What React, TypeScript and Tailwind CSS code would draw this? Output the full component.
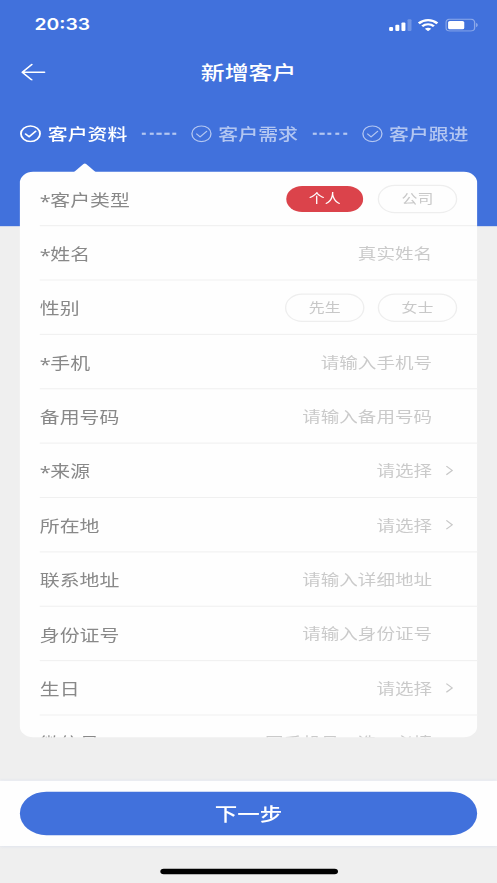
import { Fragment } from 'react';

type Field = {
  label: string;
  required?: boolean;
  placeholder?: string;
  select?: boolean;
  options?: string[];
  active?: string;
};

const steps = ['客户资料', '客户需求', '客户跟进'];

const fields: Field[] = [
  { label: '客户类型', required: true, options: ['个人', '公司'], active: '个人' },
  { label: '姓名', required: true, placeholder: '真实姓名' },
  { label: '性别', options: ['先生', '女士'] },
  { label: '手机', required: true, placeholder: '请输入手机号' },
  { label: '备用号码', placeholder: '请输入备用号码' },
  { label: '来源', required: true, placeholder: '请选择', select: true },
  { label: '所在地', placeholder: '请选择', select: true },
  { label: '联系地址', placeholder: '请输入详细地址' },
  { label: '身份证号', placeholder: '请输入身份证号' },
  { label: '生日', placeholder: '请选择', select: true },
  { label: '微信号', placeholder: '同手机号，选，必填' },
];

function StatusBar() {
  return (
    <div className="flex h-11 items-center justify-between pl-[26px] pr-[14.5px] pt-[2px]">
      <span className="pt-[0.5px] font-['Inter'] text-[14.6px] font-semibold leading-4">20:33</span>
      <div className="flex items-center">
        <svg className="h-3 w-[18px]" viewBox="0 0 18 12" fill="currentColor">
          <rect x="0.6" y="7.8" width="3" height="3.8" rx="0.9" />
          <rect x="5.3" y="5.8" width="3" height="5.8" rx="0.9" />
          <rect x="9.9" y="3.6" width="3" height="8" rx="0.9" />
          <rect x="14.5" y="0.8" width="3" height="10.8" rx="0.9" opacity="0.25" />
        </svg>
        <svg className="ml-[4.3px] h-3 w-[16px]" viewBox="0 0 16 12" fill="none" stroke="currentColor" strokeWidth="2">
          <path d="M1 4.5C5 0.5 11 0.5 15 4.5" />
          <path d="M3.6 7.2c2.5-2.5 6.3-2.5 8.8 0" />
          <path d="M5.6 9.4c1.4-1.3 3.4-1.3 4.8 0L8 11.8z" fill="currentColor" stroke="none" />
        </svg>
        <svg className="ml-[4.7px] h-3 w-[25px]" viewBox="0 0 25 12" fill="currentColor">
          <rect x="0.5" y="0.6" width="21.6" height="11" rx="2.8" fill="none" stroke="currentColor" opacity="0.4" />
          <rect x="2.1" y="2.2" width="12.2" height="7.8" rx="1.4" />
          <path d="M23.2 4.2c1.7.6 1.7 3.2 0 3.8z" opacity="0.4" />
        </svg>
      </div>
    </div>
  );
}

function Steps() {
  return (
    <div className="flex items-center justify-between pl-[15.4px] pr-[21.5px] pt-[25.3px]">
      {steps.map((step, i) => (
        <Fragment key={step}>
          {i > 0 && (
            <div className="flex gap-[2.4px] opacity-60">
              {[0, 1, 2, 3, 4].map(n => (
                <span key={n} className="h-[2px] w-[3.4px] bg-white" />
              ))}
            </div>
          )}
          <div className={i === 0 ? 'flex items-center gap-[4.7px]' : 'flex items-center gap-[4.7px] opacity-60'}>
            <svg
              className="h-4 w-4"
              viewBox="0 0 16 16"
              fill="none"
              stroke="currentColor"
              strokeWidth={i === 0 ? 1.4 : 1}
              strokeLinecap="round"
              strokeLinejoin="round"
            >
              <circle cx="8" cy="8" r="7.2" />
              <path d="M4.3 8.2l2.7 2.6 4.9-5.1" />
            </svg>
            <span className="text-[15px] font-medium leading-5">{step}</span>
          </div>
        </Fragment>
      ))}
    </div>
  );
}

function FieldRow({ field }: { field: Field }) {
  return (
    <div className="ml-[15px] flex h-[50px] shrink-0 items-center justify-between border-b border-[#f0f0f0]">
      <span className="flex h-5 text-[15px] leading-5 text-[#888888]">
        {field.required && <span className="w-[8px] font-['Noto_Sans'] leading-[22px]">*</span>}
        {field.label}
      </span>
      {field.options ? (
        <div className="flex gap-[10px] pr-[15px]">
          {field.options.map(option => (
            <button
              key={option}
              className={
                option === field.active
                  ? 'h-[26px] w-[60px] rounded-full border border-transparent bg-[#db434b] bg-clip-padding pb-[1px] text-[12px] leading-[22px] text-white'
                  : 'h-[26px] w-[60px] rounded-full border border-[#eeeeee] pb-[1px] text-[12px] leading-[22px] text-[#c8c8c8]'
              }
            >
              {option}
            </button>
          ))}
        </div>
      ) : (
        <div className="flex items-center text-[14px] text-[#cacaca]">
          <span>{field.placeholder}</span>
          <div className="flex w-[34px] pl-[9.5px]">
            {field.select && (
              <svg className="h-[10px] w-[7px]" viewBox="0 0 7 10" fill="none" stroke="#c8c8c8">
                <path d="M0.8 0.6L5.2 4.6L0.8 8.6" />
              </svg>
            )}
          </div>
        </div>
      )}
    </div>
  );
}

export default function App() {
  return (
    <div className="h-[883px] w-[497px] overflow-hidden bg-[#efefef]">
      {/* 375x812 layout stretched over the viewport */}
      <div className="flex h-[812px] w-[375px] origin-top-left scale-x-[1.32533] scale-y-[1.08744] flex-col font-['Noto_Sans_CJK_SC',sans-serif]">
        <header className="h-[208px] shrink-0 bg-[#4171dc] text-white">
          <StatusBar />
          <div className="grid h-11 grid-cols-[1fr_auto_1fr] items-center px-4">
            <svg className="h-[16px] w-[19px]" viewBox="0 0 19 16" fill="none" stroke="currentColor" strokeWidth="1.3" strokeLinecap="round">
              <path d="M17.6 8.4H1M8 1.2L0.8 8.4L8 15.6" />
            </svg>
            <h1 className="pb-[1px] text-[18px] font-medium leading-6">新增客户</h1>
          </div>
          <Steps />
        </header>

        <main className="relative mx-[15px] -mt-[50px] h-[520px] shrink-0">
          <svg className="absolute -top-[8px] left-[39.5px] h-[9px] w-[18px]" viewBox="0 0 18 9" fill="#fefefe">
            <path d="M0 9L8 0.8Q9 0 10 0.8L18 9z" />
          </svg>
          <div className="flex h-full flex-col overflow-hidden rounded-[10px] bg-[#fefefe]">
            {fields.map(field => (
              <FieldRow key={field.label} field={field} />
            ))}
          </div>
        </main>

        <footer className="mt-10 h-[60px] shrink-0 bg-[#fefefe] px-[15px] py-[10px] shadow-[0_0_3px_rgba(65,113,220,0.2)]">
          <button className="h-10 w-full rounded-full bg-[#4171dc] pb-[1px] text-[17px] font-medium text-white">下一步</button>
        </footer>
        <div className="mx-auto mt-[21px] h-[5px] w-[134px] rounded-full bg-black" />
      </div>
    </div>
  );
}
